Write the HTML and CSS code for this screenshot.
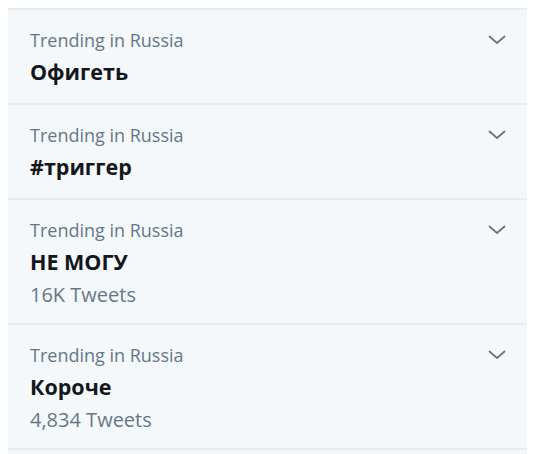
FILE: index.html
```html
<!DOCTYPE html>
<html lang="en">
<head>
<meta charset="utf-8">
<title>Trends</title>
<link rel="stylesheet" href="styles.css">
</head>
<body>
<div class="panel">
  <div class="trend">
    <div class="trend-body">
      <div class="context">Trending in Russia</div>
      <div class="name">Офигеть</div>
    </div>
    <svg class="chevron" width="18" height="10" viewBox="0 0 18 10"><polyline points="1.5,1.5 9,8 16.5,1.5" fill="none" stroke="#657786" stroke-width="1.8" stroke-linecap="round" stroke-linejoin="round"/></svg>
  </div>
  <div class="trend">
    <div class="trend-body">
      <div class="context">Trending in Russia</div>
      <div class="name">#триггер</div>
    </div>
    <svg class="chevron" width="18" height="10" viewBox="0 0 18 10"><polyline points="1.5,1.5 9,8 16.5,1.5" fill="none" stroke="#657786" stroke-width="1.8" stroke-linecap="round" stroke-linejoin="round"/></svg>
  </div>
  <div class="trend">
    <div class="trend-body">
      <div class="context">Trending in Russia</div>
      <div class="name">НЕ МОГУ</div>
      <div class="count">16K Tweets</div>
    </div>
    <svg class="chevron" width="18" height="10" viewBox="0 0 18 10"><polyline points="1.5,1.5 9,8 16.5,1.5" fill="none" stroke="#657786" stroke-width="1.8" stroke-linecap="round" stroke-linejoin="round"/></svg>
  </div>
  <div class="trend">
    <div class="trend-body">
      <div class="context">Trending in Russia</div>
      <div class="name">Короче</div>
      <div class="count">4,834 Tweets</div>
    </div>
    <svg class="chevron" width="18" height="10" viewBox="0 0 18 10"><polyline points="1.5,1.5 9,8 16.5,1.5" fill="none" stroke="#657786" stroke-width="1.8" stroke-linecap="round" stroke-linejoin="round"/></svg>
  </div>
  <div class="trend trend-partial"></div>
</div>
</body>
</html>
```
FILE: styles.css
```css
html, body {
  background: #ffffff;
}
body {
  margin: 8px;
  font-family: "Open Sans", "Noto Sans", sans-serif;
  overflow: hidden;
}
.panel {
  width: 521px;
  background: #f5f8fa;
}
.trend {
  display: flex;
  justify-content: space-between;
  align-items: flex-start;
  border-top: 2px solid #e6ecf0;
  padding: 14px 23px 15px 22px;
}
.trend-body {
  display: flex;
  flex-direction: column;
}
.context {
  font-size: 18px;
  line-height: 32px;
  color: #657786;
}
.count {
  font-size: 20px;
  line-height: 32px;
  margin-top: 1px;
  margin-bottom: -3px;
  color: #657786;
}
.name {
  font-size: 21.5px;
  line-height: 32px;
  font-weight: 700;
  color: #14171a;
}
.chevron {
  margin-top: 11px;
}
.trend-partial {
  height: 20px;
  padding: 0;
}
```
